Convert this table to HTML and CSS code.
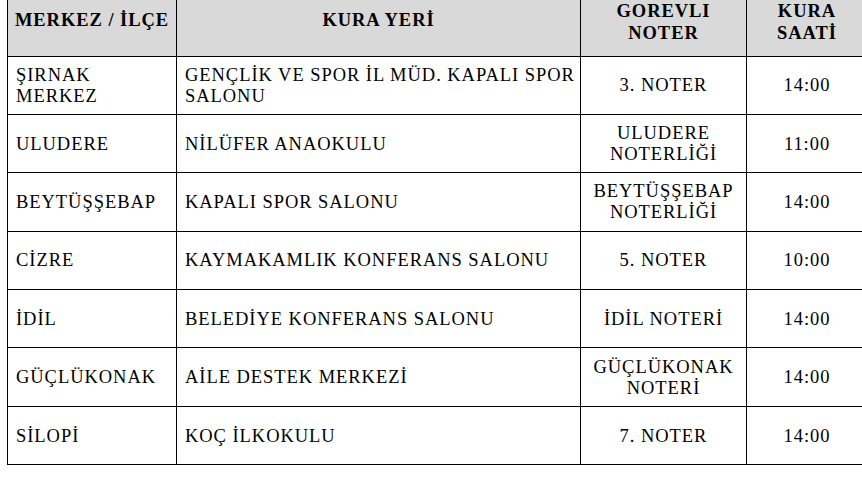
FILE: index.html
```html
<!DOCTYPE html>
<html lang="tr">
<head>
<meta charset="utf-8">
<link rel="stylesheet" href="styles.css">
</head>
<body>
<div class="page">
<table class="kura">
  <colgroup>
    <col class="c1"><col class="c2"><col class="c3"><col class="c4">
  </colgroup>
  <thead>
    <tr>
      <th class="h-low">MERKEZ / İLÇE</th>
      <th class="h-low">KURA YERİ</th>
      <th class="h-high">GOREVLI<br>NOTER</th>
      <th class="h-high">KURA<br>SAATİ</th>
    </tr>
  </thead>
  <tbody>
    <tr><td>ŞIRNAK<br>MERKEZ</td><td>GENÇLİK VE SPOR İL MÜD. KAPALI SPOR SALONU</td><td class="ctr">3. NOTER</td><td class="ctr">14:00</td></tr>
    <tr><td>ULUDERE</td><td>NİLÜFER ANAOKULU</td><td class="ctr">ULUDERE<br>NOTERLİĞİ</td><td class="ctr">11:00</td></tr>
    <tr><td>BEYTÜŞŞEBAP</td><td>KAPALI SPOR SALONU</td><td class="ctr">BEYTÜŞŞEBAP<br>NOTERLİĞİ</td><td class="ctr">14:00</td></tr>
    <tr><td>CİZRE</td><td>KAYMAKAMLIK KONFERANS SALONU</td><td class="ctr">5. NOTER</td><td class="ctr">10:00</td></tr>
    <tr><td>İDİL</td><td>BELEDİYE KONFERANS SALONU</td><td class="ctr">İDİL NOTERİ</td><td class="ctr">14:00</td></tr>
    <tr><td>GÜÇLÜKONAK</td><td>AİLE DESTEK MERKEZİ</td><td class="ctr">GÜÇLÜKONAK<br>NOTERİ</td><td class="ctr">14:00</td></tr>
    <tr><td>SİLOPİ</td><td>KOÇ İLKOKULU</td><td class="ctr">7. NOTER</td><td class="ctr">14:00</td></tr>
  </tbody>
</table>
</div>
</body>
</html>
```

FILE: styles.css
```css
html, body {
  margin: 0;
  padding: 0;
  background: #fff;
  overflow: hidden;
}
.page {
  padding-left: 7px;
  width: 880px;
}
.kura {
  border-collapse: collapse;
  table-layout: fixed;
  width: 860px;
  font-family: "Liberation Serif", "Times New Roman", serif;
  font-size: 18.5px;
  letter-spacing: 0.95px;
  color: #000;
}
.c1 { width: 169px; }
.c2 { width: 404px; }
.c3 { width: 166px; }
.c4 { width: 121px; }
.kura th, .kura td {
  border: 1px solid #000;
}
.kura thead tr { height: 56px; }
.kura tbody tr { height: 58.4px; }
.kura th {
  border-top: none;
  background: #d9d9d9;
  font-weight: bold;
  vertical-align: top;
  text-align: center;
  line-height: 22px;
  padding: 0 2px;
}
.kura th.h-low { padding-top: 9px; }
.kura th.h-high { padding-top: 0; }
.kura td {
  padding: 1px 2px 0 8px;
  vertical-align: middle;
  line-height: 21px;
}
.kura td.ctr { text-align: center; padding-left: 2px; }
```
